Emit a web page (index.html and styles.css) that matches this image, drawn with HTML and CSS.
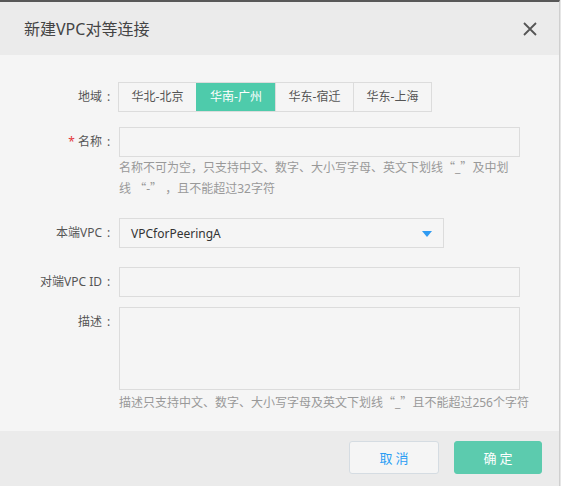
FILE: index.html
```html
<!DOCTYPE html>
<html lang="zh-CN">
<head>
<meta charset="utf-8">
<title>新建VPC对等连接</title>
<link rel="stylesheet" href="styles.css">
</head>
<body>
<div class="modal">
  <div class="header">
    <span class="title">新建VPC对等连接</span>
    <button class="close" aria-label="关闭">
      <svg width="14" height="14" viewBox="0 0 14 14"><path d="M1 1 L13 13 M13 1 L1 13" stroke="#555" stroke-width="1.8" fill="none"/></svg>
    </button>
  </div>
  <div class="body">
    <div class="row row-region">
      <div class="label">地域<span class="colon">:</span></div>
      <div class="seg">
        <span class="seg-item">华北-北京</span>
        <span class="seg-item active">华南-广州</span>
        <span class="seg-item">华东-宿迁</span>
        <span class="seg-item">华东-上海</span>
      </div>
    </div>
    <div class="row row-name">
      <div class="label"><span class="req">*</span> 名称<span class="colon">:</span></div>
      <div class="field">
        <div class="input"></div>
        <div class="hint hint-name">名称不可为空，只支持中文、数字、大小写字母、英文下划线<span class="cjk">“</span>_<span class="cjk">”</span>及中划<br>线 <span class="cjk">“</span>-<span class="cjk">”</span> ，且不能超过32字符</div>
      </div>
    </div>
    <div class="row row-select">
      <div class="label">本端VPC<span class="colon">:</span></div>
      <div class="select">
        <span class="select-text">VPCforPeeringA</span>
        <span class="caret"></span>
      </div>
    </div>
    <div class="row row-peer">
      <div class="label">对端VPC ID<span class="colon">:</span></div>
      <div class="input"></div>
    </div>
    <div class="row row-desc">
      <div class="label">描述<span class="colon">:</span></div>
      <div class="field">
        <div class="textarea"></div>
        <div class="hint hint-desc">描述只支持中文、数字、大小写字母及英文下划线<span class="cjk">“</span>_<span class="cjk">”</span>且不能超过256个字符</div>
      </div>
    </div>
  </div>
  <div class="footer">
    <button class="btn btn-cancel">取消</button>
    <button class="btn btn-ok">确定</button>
  </div>
</div>
</body>
</html>
```

FILE: styles.css
```css
* { box-sizing: border-box; }
html, body { margin: 0; padding: 0; }
body {
  width: 561px;
  height: 486px;
  background: #e6e6e6;
  font-family: "Noto Sans", "Noto Sans CJK SC", sans-serif;
  font-size: 12px;
  color: #555;
  overflow: hidden;
}
.modal {
  width: 560px;
  height: 486px;
  border-top: 2px solid #585858;
  border-right: 1px solid #cfcfcf;
  display: flex;
  flex-direction: column;
  background: #f5f5f5;
}
.header {
  height: 53px;
  flex: none;
  background: #ebebeb;
  display: flex;
  align-items: center;
  justify-content: space-between;
  padding: 0 22px 0 24px;
}
.title {
  font-size: 16px;
  color: #444;
  line-height: 20px;
}
.close {
  border: 0;
  background: none;
  padding: 0;
  width: 14px;
  height: 14px;
  display: flex;
  cursor: pointer;
}
.body {
  flex: 1;
  padding-top: 27px;
}
.row {
  display: flex;
  align-items: flex-start;
}
.label {
  width: 114px;
  height: 30px;
  flex: none;
  text-align: right;
  margin-right: 5px;
  line-height: 30px;
  color: #555;
  white-space: nowrap;
  overflow: hidden;
}
.colon {
  display: inline-block;
  width: 12px;
  text-align: center;
  padding-left: 1px;
}
.cjk {
  font-family: "Noto Sans CJK SC", sans-serif;
  line-height: 1;
}
.req { color: #e4393c; }
.seg {
  display: flex;
  height: 30px;
  border: 1px solid #dcdcdc;
  margin-left: -1px;
}
.seg-item {
  width: 78px;
  line-height: 28px;
  text-align: center;
  color: #555;
  border-left: 1px solid #dcdcdc;
}
.seg-item:first-child { border-left: 0; width: 77px; }
.seg-item.active {
  background: #4ecbab;
  color: #fff;
  border-left-color: #4ecbab;
  width: 79px;
}
.row-name { margin-top: 15px; }
.input {
  width: 401px;
  height: 30px;
  border: 1px solid #dcdcdc;
  background: #f5f5f5;
}
.hint {
  color: #999;
  line-height: 21px;
  white-space: nowrap;
}
.hint-name { height: 42px; }
.hint-desc { height: 21px; margin-top: 2px; }
.row-select { margin-top: 19px; }
.select {
  width: 325px;
  height: 30px;
  border: 1px solid #dcdcdc;
  display: flex;
  align-items: center;
  justify-content: space-between;
  padding: 0 11px 0 11px;
}
.select-text {
  color: #333;
  font-size: 12px;
}
.caret {
  width: 0;
  height: 0;
  border-left: 5px solid transparent;
  border-right: 5px solid transparent;
  border-top: 6px solid #2f9bf2;
  margin-top: 2px;
}
.row-peer { margin-top: 19px; }
.row-desc { margin-top: 10px; }
.textarea {
  width: 401px;
  height: 83px;
  border: 1px solid #dcdcdc;
}
.footer {
  height: 55px;
  flex: none;
  background: #ebebeb;
  display: flex;
  justify-content: flex-end;
  align-items: flex-start;
  padding: 10px 17px 0 0;
  gap: 15px;
}
.btn {
  height: 33px;
  border-radius: 3px;
  font-family: "Noto Sans CJK SC", sans-serif;
  font-size: 13px;
  letter-spacing: 3px;
  padding: 0 0 0 3px;
  cursor: pointer;
}
.btn-cancel {
  width: 90px;
  background: #f5f5f5;
  border: 1px solid #d5dce2;
  color: #2a9df4;
}
.btn-ok {
  width: 88px;
  background: #5ccbae;
  border: 1px solid #5ccbae;
  color: #fff;
}
```
